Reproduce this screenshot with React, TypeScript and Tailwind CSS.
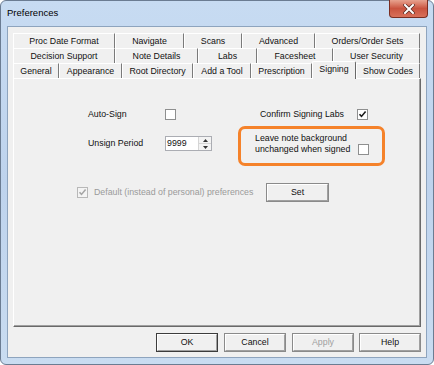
const font = { fontFamily: '"Liberation Sans", Arial, sans-serif' };

type Tab = { label: string; w: string; selected?: boolean };

const row1: Tab[] = [
  { label: "Proc Date Format", w: "w-[102px]" },
  { label: "Navigate", w: "w-[69px]" },
  { label: "Scans", w: "w-[58px]" },
  { label: "Advanced", w: "w-[73px]" },
  { label: "Orders/Order Sets", w: "w-[105px]" },
];

const row2: Tab[] = [
  { label: "Decision Support", w: "w-[102px]" },
  { label: "Note Details", w: "w-[83px]" },
  { label: "Labs", w: "w-[59px]" },
  { label: "Facesheet", w: "w-[76px]" },
  { label: "User Security", w: "w-[87px]" },
];

const row3: Tab[] = [
  { label: "General", w: "w-[46px]" },
  { label: "Appearance", w: "w-[63px]" },
  { label: "Root Directory", w: "w-[71px]" },
  { label: "Add a Tool", w: "w-[58px]" },
  { label: "Prescription", w: "w-[61px]" },
  { label: "Signing", w: "w-[44px]", selected: true },
  { label: "Show Codes", w: "w-[64px]" },
];

function TabRow({ tabs }: { tabs: Tab[] }) {
  return (
    <div className="flex h-[15px] items-end">
      {tabs.map((t) =>
        t.selected ? (
          <div
            key={t.label}
            className={`relative top-[1px] z-10 flex h-[18px] ${t.w} items-start justify-center rounded-t-[2px] border-l border-t border-r border-l-white border-t-white border-r-[#696969] bg-[#f0f0f0] pt-[1px] leading-[12px]`}
          >
            {t.label}
          </div>
        ) : (
          <div
            key={t.label}
            className={`flex h-[15px] ${t.w} items-center justify-center border-l border-t border-r border-l-white border-t-white border-r-[#7a7a7a] bg-[#f0f0f0] leading-none`}
          >
            {t.label}
          </div>
        )
      )}
    </div>
  );
}

function Check({ checked, disabled }: { checked?: boolean; disabled?: boolean }) {
  return (
    <div
      className={`flex h-[11px] w-[11px] shrink-0 items-center justify-center border ${
        disabled ? "border-[#b8b8b8] bg-[#f4f4f4]" : "border-[#8e8f8f] bg-white"
      }`}
    >
      {checked ? (
        <svg width="9" height="9" viewBox="0 0 9 9">
          <path
            d="M1.5 4.2 L3.5 6.4 L7.6 1.6"
            fill="none"
            stroke={disabled ? "#a6a6a6" : "#1a1a1a"}
            strokeWidth="1.6"
          />
        </svg>
      ) : null}
    </div>
  );
}

function Btn({ label, def, disabled, w }: { label: string; def?: boolean; disabled?: boolean; w: string }) {
  return (
    <div className={`${w} h-[19px] ${def ? "border border-[#3c3c3c]" : "border border-[#8a8a8a]"} bg-[#f0f0f0]`}>
      <div
        className={`flex h-full w-full items-center justify-center border-l border-t border-b border-r border-l-white border-t-white border-b-[#a0a0a0] border-r-[#a0a0a0] leading-none ${
          disabled ? "text-[#a0a0a0]" : "text-[#111]"
        }`}
      >
        {label}
      </div>
    </div>
  );
}

export default function App() {
  return (
    <div className="h-[365px] w-[434px] bg-white text-[8.8px] text-[#111]" style={font}>
      <div className="flex h-full flex-col rounded-[6px] border border-[#6b7c92] bg-gradient-to-b from-[#c7dbf2] via-[#bed3ed] to-[#c9dcf1] px-[6px] pb-[6px]">
        <div className="flex h-[25px] items-start justify-between">
          <span className="mt-[5px] text-[9.5px] leading-[14px] text-black">Preferences</span>
          <div className="-mr-[1px] -mt-[1px] flex h-[18px] w-[39px] items-center justify-center rounded-b-[4px] border border-t-0 border-[#7a2e22] bg-gradient-to-b from-[#e7a28f] via-[#c9533f] to-[#d8705a]">
            <svg width="12" height="10" viewBox="0 0 12 10">
              <path d="M2 1 L10 9 M10 1 L2 9" stroke="#5b2a22" strokeWidth="3.4" strokeLinecap="square" />
              <path d="M2 1 L10 9 M10 1 L2 9" stroke="#ffffff" strokeWidth="2" strokeLinecap="square" />
            </svg>
          </div>
        </div>

        <div className="flex flex-1 flex-col border border-[#8ea4be] bg-[#f0f0f0] px-[5px] pb-[5px] pt-[6px]">
          <TabRow tabs={row1} />
          <TabRow tabs={row2} />
          <TabRow tabs={row3} />

          <div className="h-[249px] w-[408px] border-l border-t border-r border-b border-l-white border-t-white border-r-[#696969] border-b-[#696969] shadow-[inset_-1px_-1px_0_#a0a0a0]">
            <div className="pl-[74px] pt-[30px]">
              <div className="flex">
                <div className="flex w-[150px] flex-col">
                  <div className="flex h-[11px] items-center">
                    <span className="w-[77px] leading-none">Auto-Sign</span>
                    <Check />
                  </div>
                  <div className="mt-[16px] flex h-[15px] items-center">
                    <span className="w-[77px] leading-none">Unsign Period</span>
                    <div className="flex h-[15px] w-[47px] border border-[#abadb3] bg-white">
                      <span className="flex-1 pl-[1px] leading-[13px]">9999</span>
                      <div className="flex w-[13px] flex-col border-l border-[#d5d5d5] bg-[#f3f3f3]">
                        <div className="flex flex-1 items-center justify-center border-b border-[#d5d5d5]">
                          <svg width="5" height="3" viewBox="0 0 5 3">
                            <path d="M0 3 L2.5 0 L5 3 Z" fill="#333" />
                          </svg>
                        </div>
                        <div className="flex flex-1 items-center justify-center">
                          <svg width="5" height="3" viewBox="0 0 5 3">
                            <path d="M0 0 L2.5 3 L5 0 Z" fill="#333" />
                          </svg>
                        </div>
                      </div>
                    </div>
                  </div>
                </div>

                <div className="flex w-[147px] flex-col">
                  <div className="flex h-[11px] items-center justify-end pr-[17px]">
                    <span className="mr-[13px] leading-none">Confirm Signing Labs</span>
                    <Check checked />
                  </div>
                  <div className="mt-[6px] flex h-[40px] items-end rounded-[7px] border-[3px] border-[#f5822a] pb-[8px] pl-[14px]">
                    <div className="w-[103px] leading-[11px]">
                      <div>Leave note background</div>
                      <div>unchanged when signed</div>
                    </div>
                    <Check />
                  </div>
                </div>
              </div>

              <div className="-ml-[11px] mt-[17px] flex h-[19px] items-center">
                <Check checked disabled />
                <span className="ml-[6px] w-[172px] leading-none text-[#9a9a9a]">
                  Default (instead of personal) preferences
                </span>
                <Btn label="Set" w="w-[63px]" />
              </div>
            </div>
          </div>

          <div className="mt-[6px] flex justify-end">
            <Btn label="OK" def w="w-[62px]" />
            <div className="ml-[6px]">
              <Btn label="Cancel" w="w-[62px]" />
            </div>
            <div className="ml-[6px]">
              <Btn label="Apply" disabled w="w-[62px]" />
            </div>
            <div className="ml-[5px]">
              <Btn label="Help" w="w-[62px]" />
            </div>
          </div>
        </div>
      </div>
    </div>
  );
}
